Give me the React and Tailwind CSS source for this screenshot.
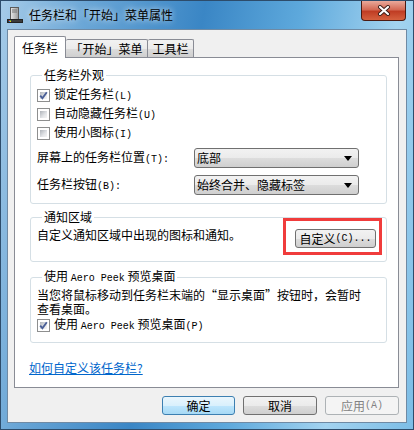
import React from 'react';

const btnGray = 'bg-[linear-gradient(#f2f2f2_0%,#ebebeb_50%,#dddddd_50%,#cfcfcf_100%)]';

// latin bits are half width in the original bitmap font
function L({ children }) {
  return <span className="font-['Liberation_Mono',monospace] text-[10px]">{children}</span>;
}

function CheckBox({ checked }) {
  return (
    <div className="w-[13px] h-[13px] border border-[#8e8f8f] bg-white p-[2px] shrink-0">
      <div className="w-full h-full bg-[linear-gradient(135deg,#aeb3b9_0%,#e3e5e8_60%,#f5f5f5_100%)] relative">
        {checked && (
          <svg width="13" height="13" viewBox="0 0 13 13" className="absolute -left-[3px] -top-[3px]">
            <path d="M3.2 6.6 L5.4 9.2 L9.8 3.2" fill="none" stroke="#4a5f97" strokeWidth="1.9" />
          </svg>
        )}
      </div>
    </div>
  );
}

function CheckRow({ checked, children }) {
  return (
    <div className="h-[19px] flex items-center gap-[4px]">
      <CheckBox checked={checked} />
      <span>{children}</span>
    </div>
  );
}

function Select({ value }) {
  return (
    <div className={`w-[165px] h-[20px] border border-[#707070] rounded-[3px] ${btnGray} flex items-center pl-[2px] pr-[6px]`}>
      <span className="flex-1">{value}</span>
      <svg width="8" height="5" viewBox="0 0 8 5">
        <path d="M0 0 H8 L4 5 Z" fill="#000" />
      </svg>
    </div>
  );
}

function Group({ title, className = '', children }) {
  return (
    <fieldset className={`border border-[#d5dfe5] rounded-[3px] ${className}`}>
      <legend className="ml-[5px] px-[2px] leading-[16px]">{title}</legend>
      {children}
    </fieldset>
  );
}

function TitleIcon() {
  return (
    <svg width="16" height="16" viewBox="0 0 16 16">
      <defs>
        <linearGradient id="tw" x1="0" x2="1">
          <stop offset="0" stopColor="#e9e9e9" />
          <stop offset="1" stopColor="#9a9a9a" />
        </linearGradient>
      </defs>
      <rect x="3.5" y="0.5" width="8" height="12" fill="url(#tw)" stroke="#5b5b5b" />
      <path d="M5 3 H10 M5 5 H10" stroke="#777" />
      <rect x="0.5" y="12.5" width="15" height="3" fill="#3b3b3b" stroke="#222" />
      <rect x="2" y="13" width="1" height="1" fill="#e2402b" />
      <rect x="3" y="13" width="1" height="1" fill="#5cb531" />
      <rect x="2" y="14" width="1" height="1" fill="#2b8ce0" />
      <rect x="3" y="14" width="1" height="1" fill="#f2c21b" />
    </svg>
  );
}

export default function App() {
  return (
    <div className="w-[414px] h-[430px] relative border border-[#2d4c6b] bg-[linear-gradient(100deg,#a6cbe8_0%,#6aa6d6_18%,#3a86c5_42%,#5ea9dc_62%,#a3d3f0_82%,#7cbde6_100%)] flex flex-col font-['Noto_Sans_CJK_SC',sans-serif] text-[12px] text-black leading-[16px]">
      <div className="h-[28px] flex items-center pl-[6px] gap-[6px]">
        <TitleIcon />
        <span className="[text-shadow:0_0_6px_rgba(255,255,255,0.95)]">任务栏和「开始」菜单属性</span>
      </div>

      <div className="absolute top-0 right-[7px] w-[45px] h-[20px] rounded-b-[4px] border border-t-0 border-[#4b1a12] bg-[linear-gradient(#e9a99b_0%,#d46a55_45%,#c03d24_55%,#d5613f_100%)] flex items-center justify-center">
        <svg width="14" height="11" viewBox="0 0 14 11">
          <path d="M3 2 L11 9 M11 2 L3 9" stroke="#3a1d18" strokeWidth="4" strokeLinecap="round" />
          <path d="M3 2 L11 9 M11 2 L3 9" stroke="#fff" strokeWidth="2.2" strokeLinecap="round" />
        </svg>
      </div>

      <div className="mx-[6px] w-[400px] h-[394px] border border-[#6f8aa4] bg-[#f0f0f0] pt-[6px] pl-[6px] pr-[7px]">
        <div className="flex items-end -mb-[1px] relative z-10">
          <div className="w-[52px] h-[22px] bg-white border border-b-0 border-[#898c95] rounded-t-[2px] flex items-center justify-center">
            任务栏
          </div>
          <div className={`w-[82px] h-[18px] mb-[1px] border border-l-0 border-b-0 border-[#898c95] rounded-t-[2px] ${btnGray} flex items-center justify-center`}>
            「开始」菜单
          </div>
          <div className={`w-[46px] h-[18px] mb-[1px] border border-l-0 border-b-0 border-[#898c95] rounded-t-[2px] ${btnGray} flex items-center justify-center`}>
            工具栏
          </div>
        </div>

        <div className="h-[331px] bg-white border border-[#898c95] pt-[9px] pl-[15px] pr-[11px] flex flex-col">
          <Group title="任务栏外观" className="pl-[6px] pt-[3px] pb-[8px]">
            <CheckRow checked>锁定任务栏<L>(L)</L></CheckRow>
            <CheckRow>自动隐藏任务栏<L>(U)</L></CheckRow>
            <CheckRow>使用小图标<L>(I)</L></CheckRow>
            <div className="flex items-center mt-[5px]">
              <span className="w-[157px]">屏幕上的任务栏位置<L>(T):</L></span>
              <Select value="底部" />
            </div>
            <div className="flex items-center mt-[7px]">
              <span className="w-[157px]">任务栏按钮<L>(B):</L></span>
              <Select value="始终合并、隐藏标签" />
            </div>
          </Group>

          <Group title="通知区域" className="mt-[5px] relative pl-[6px] pr-[10px] pt-[2px] pb-[13px]">
            <div className="flex items-start">
              <span className="flex-1">自定义通知区域中出现的图标和通知。</span>
              <div className={`mt-[2px] w-[81px] h-[19px] border border-[#707070] rounded-[3px] ${btnGray} flex items-center justify-center`}>
                自定义<L>(C)...</L>
              </div>
            </div>
            <div className="absolute left-[252px] -top-[7px] w-[99px] h-[37px] border-[3px] border-[#f03c3c]" />
          </Group>

          <Group title={<>使用 <L>Aero Peek</L> 预览桌面</>} className="mt-[6px] pl-[6px] pt-[1px] pb-[7px]">
            <p className="leading-[14px]">
              当您将鼠标移动到任务栏末端的“显示桌面”按钮时，会暂时
              <br />
              查看桌面。
            </p>
            <CheckRow checked>使用 <L>Aero Peek</L> 预览桌面<L>(P)</L></CheckRow>
          </Group>

          <a className="mt-[17px] -ml-[1px] text-[#0066cc] underline self-start cursor-pointer">如何自定义该任务栏?</a>
        </div>

        <div className="mt-[8px] flex justify-end gap-[8px]">
          <div className="w-[73px] h-[19px] border border-[#3c7fb1] rounded-[3px] bg-[linear-gradient(#eaf6fd_0%,#d9f0fc_50%,#bee6fd_50%,#a7d9f5_100%)] flex items-center justify-center">
            确定
          </div>
          <div className={`w-[74px] h-[19px] border border-[#707070] rounded-[3px] ${btnGray} flex items-center justify-center`}>
            取消
          </div>
          <div className="w-[74px] h-[19px] border border-[#adb2b5] rounded-[3px] bg-[#f4f4f4] text-[#838383] flex items-center justify-center">
            应用<L>(A)</L>
          </div>
        </div>
      </div>
    </div>
  );
}
